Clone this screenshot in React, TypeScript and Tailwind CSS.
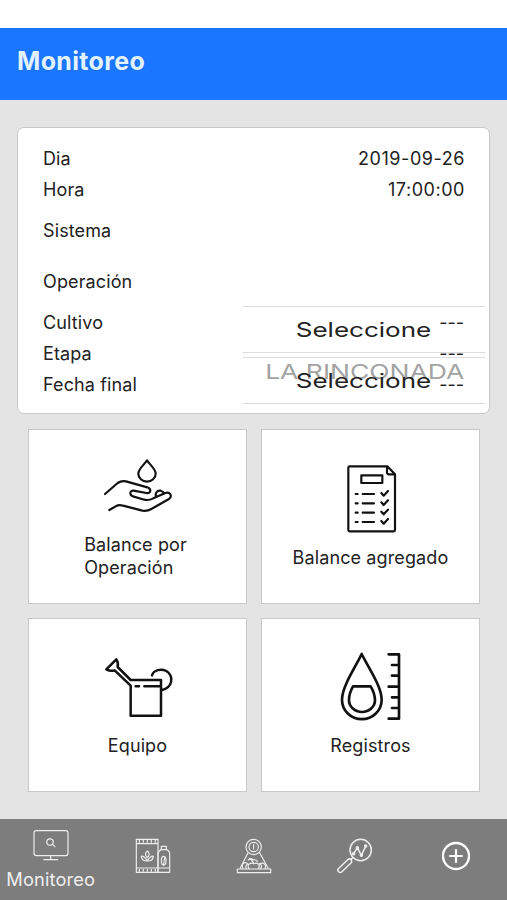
import type { ReactNode } from "react";

const rows = [
  { label: "Dia", value: "2019-09-26", height: "h-[31px]" },
  { label: "Hora", value: "17:00:00", height: "h-[31px]" },
  { label: "Sistema", value: "", height: "h-[51px]" },
  { label: "Operación", value: "", height: "h-[51px]" },
  { label: "Cultivo", value: "---", height: "h-[31px]" },
  { label: "Etapa", value: "---", height: "h-[31px]" },
  { label: "Fecha final", value: "---", height: "h-[31px]" },
];

const HandIcon = () => (
  <svg className="w-[72px] h-[58px]" viewBox="36 36 216 174" fill="none" stroke="#111" strokeWidth="6.5" strokeLinecap="round" strokeLinejoin="round">
    <path d="M171 46C164 58 145 71 145 86a26 24 0 0 0 52 0C197 71 178 58 171 46Z" />
    <path d="M45 147 83 114Q94 106 108 109L172 127C186 132 182 147 169 144L131 137C118 136 118 151 129 154L163 164Q177 167 190 160L226 144C240 139 248 153 237 162L184 192Q172 199 157 197L99 182Q87 178 77 184L58 195" />
    <path d="M198 155C194 141 205 136 212 137Q219 139 222 145" />
  </svg>
);

const ChecklistIcon = () => (
  <svg className="w-[52px] h-[70px]" viewBox="75 38 156 210" fill="none" stroke="#111" strokeWidth="6.5" strokeLinecap="round" strokeLinejoin="round">
    <path d="M199 45H86q-4 0-4 4V236q0 4 4 4H218q4 0 4-4V69ZM198 46V63q0 6 6 6H221" />
    <path d="M121 72H184V95H121Z" />
    {[128, 156, 184, 212].map((y) => (
      <g key={y}>
        <path d={`M104 ${y}h6M125 ${y}h34`} />
        <path d={`M181 ${y - 3}l7 8 13-14`} />
      </g>
    ))}
  </svg>
);

const WateringIcon = () => (
  <svg className="w-[72px] h-[66px]" viewBox="36 42 216 198" fill="none" stroke="#111" strokeWidth="7.5" strokeLinecap="round" strokeLinejoin="round">
    <path d="M119 117H210V224H119V134L71 88Q58 92 46 85L76 55Q83 66 80 78Z" />
    <path d="M134 136h10M160 136h49" />
    <path d="M183 103C188 87 210 82 226 90C249 105 246 139 213 147" />
  </svg>
);

const DropIcon = () => (
  <svg className="w-[66px] h-[70px]" viewBox="51 36 198 210" fill="none" stroke="#111" strokeWidth="8" strokeLinecap="round" strokeLinejoin="round">
    <path d="M122 42C104 81 63 139 63 179a59 58 0 0 0 119 0C182 139 141 81 122 42Z" />
    <path d="M96 139H149Q162 161 162 181a39 35 0 0 1-78 0Q84 160 96 139Z" />
    <path d="M203 43H234V236H203M213 75H234M213 107H234M203 140H234M213 172H234M213 204H234" />
  </svg>
);

const MonitorIcon = () => (
  <svg className="w-[36px] h-[32px]" viewBox="101 40 108 96" fill="none" stroke="#eee" strokeWidth="3.5" strokeLinecap="round" strokeLinejoin="round">
    <rect x="104" y="45" width="102" height="75" rx="7" />
    <path d="M154 121V131M134 132H175" />
    <circle cx="152" cy="79" r="9.5" />
    <path d="M159 86 167 93" />
  </svg>
);

const SuppliesIcon = () => (
  <svg className="w-[36px] h-[36px]" viewBox="404 70 108 108" fill="none" stroke="#eee" strokeWidth="3.5" strokeLinejoin="round">
    <path d="M408 74H473V173H408ZM408 87H473M408 160H473" />
    <path d="M417 76v8M429 76v8M441 76v8M453 76v8M465 76v8M417 163v8M429 163v8M441 163v8M453 163v8M465 163v8" />
    <path d="M441 109Q430 118 441 129Q452 118 441 109ZM441 139C435 127 427 123 423 125Q425 140 441 139ZM441 139C447 127 455 123 459 125Q457 140 441 139Z" />
    <path d="M473 173V116Q475 108 483 105V95H498V105Q508 108 508 117V173H473M480 105H501M476 160H508" />
    <ellipse cx="490" cy="138" rx="7" ry="13" />
    <path d="M489 154 493 129" />
  </svg>
);

const ScaleIcon = () => (
  <svg className="w-[36px] h-[36px]" viewBox="48 39 108 108" fill="none" stroke="#eee" strokeWidth="3.5" strokeLinecap="round" strokeLinejoin="round">
    <circle cx="101" cy="66" r="23" />
    <circle cx="101" cy="66" r="14" />
    <path d="M101 59V72M84 83 61 129M119 83 144 129M52 132H152V143H52Z" />
    <path d="M69 131C62 116 74 108 84 117C77 118 76 129 79 131M87 131C79 120 91 111 102 116C114 111 122 122 115 131M122 131C127 122 123 116 117 117C132 110 140 119 135 131" />
    <path d="M101 116Q97 104 88 101M85 105Q93 97 100 105Q109 102 112 110" />
  </svg>
);

const AnalysisIcon = () => (
  <svg className="w-[36px] h-[36px]" viewBox="353 40 108 108" fill="none" stroke="#eee" strokeWidth="3.5" strokeLinecap="round" strokeLinejoin="round">
    <circle cx="424" cy="76" r="32" strokeWidth="4.5" />
    <path d="M403 87 414 69 426 92 439 65" strokeWidth="4.5" />
    <g fill="#eee">
      <circle cx="403" cy="87" r="3.5" />
      <circle cx="414" cy="69" r="3.5" />
      <circle cx="426" cy="92" r="3.5" />
      <circle cx="439" cy="64" r="3.5" />
    </g>
    <path d="M400 99 395 104M385 105 357 132C352 138 361 147 367 142L395 115C401 107 392 99 385 105Z" strokeWidth="4.5" />
  </svg>
);

const AddIcon = () => (
  <svg className="w-[30px] h-[30px]" viewBox="0 0 30 30" fill="none" stroke="#fff">
    <circle cx="15" cy="15" r="13" strokeWidth="2.3" />
    <path d="M15 8.3V21.7M8.3 15H21.7" strokeWidth="2.2" />
  </svg>
);

const Picker = ({ hint }: { hint?: string }) => (
  <div className="relative h-[47px] w-[242px] border-y border-[#dcdcdc] text-[20px] leading-none tracking-normal whitespace-nowrap">
    {hint && (
      <span className="absolute right-[21px] top-[4px] origin-right scale-x-[1.325] text-[#a3a3a3]">{hint}</span>
    )}
    <span className="absolute right-[54px] top-[13px] origin-right scale-x-[1.3] text-[#222]">Seleccione</span>
  </div>
);

const Tile = ({ icon, label }: { icon: ReactNode; label: ReactNode }) => (
  <div className="flex flex-col items-center justify-center border border-[#c8c8c8] bg-white">
    {icon}
    <p className="leading-[23px]">{label}</p>
  </div>
);

const App = () => {
  return (
    <div className="flex h-[900px] w-[507px] flex-col overflow-hidden bg-[#e4e4e4] font-['Inter',sans-serif] text-[18px] tracking-[0.12px] text-[#222]">
      <div className="h-[28px] bg-white" />
      <header className="h-[72px] bg-[#1a75ff] pl-[17px] pt-[16px]">
        <h1 className="text-[25px] font-bold leading-[34px] tracking-[0.35px] text-[#e2f2ff]">Monitoreo</h1>
      </header>

      <section className="relative mx-[17px] mt-[27px] h-[287px] rounded-[7px] border border-[#c8c8c8] bg-white px-[25px] pt-[15px]">
        {rows.map((row) => (
          <div key={row.label} className={`flex items-center justify-between ${row.height}`}>
            <span>{row.label}</span>
            <span className={row.value === "---" ? "tracking-normal" : "-mr-[1px] tracking-[0.55px]"}>{row.value}</span>
          </div>
        ))}
        <div className="absolute right-[4px] top-[178px] flex flex-col gap-[4px]">
          <Picker />
          <Picker hint="LA RINCONADA" />
        </div>
      </section>

      <main className="mr-[27px] ml-[28px] mt-[15px] grid h-[363px] grid-cols-2 grid-rows-2 gap-[14px]">
        <Tile
          icon={<div className="mt-[4px] mb-[18px]"><HandIcon /></div>}
          label={<span className="block -translate-x-[2px]">Balance por<br />Operación</span>}
        />
        <Tile icon={<div className="mb-[12px] pl-[2px]"><ChecklistIcon /></div>} label="Balance agregado" />
        <Tile icon={<div className="mt-[2px] mb-[13px] pl-[2px]"><WateringIcon /></div>} label="Equipo" />
        <Tile icon={<div className="mb-[12px]"><DropIcon /></div>} label="Registros" />
      </main>

      <nav className="mt-auto grid h-[81px] grid-cols-5 items-center bg-[#7d7d7d] pb-[8px] text-[#eee]">
        <div className="flex flex-col items-center pt-[8px]">
          <MonitorIcon />
          <span className="mt-[6px] text-[18.3px] leading-[24px]">Monitoreo</span>
        </div>
        <div className="flex justify-center pl-[1px]"><SuppliesIcon /></div>
        <div className="flex justify-center pl-[1px]"><ScaleIcon /></div>
        <div className="flex justify-center pl-[1px]"><AnalysisIcon /></div>
        <div className="flex justify-center"><AddIcon /></div>
      </nav>
    </div>
  );
};

export default App;
